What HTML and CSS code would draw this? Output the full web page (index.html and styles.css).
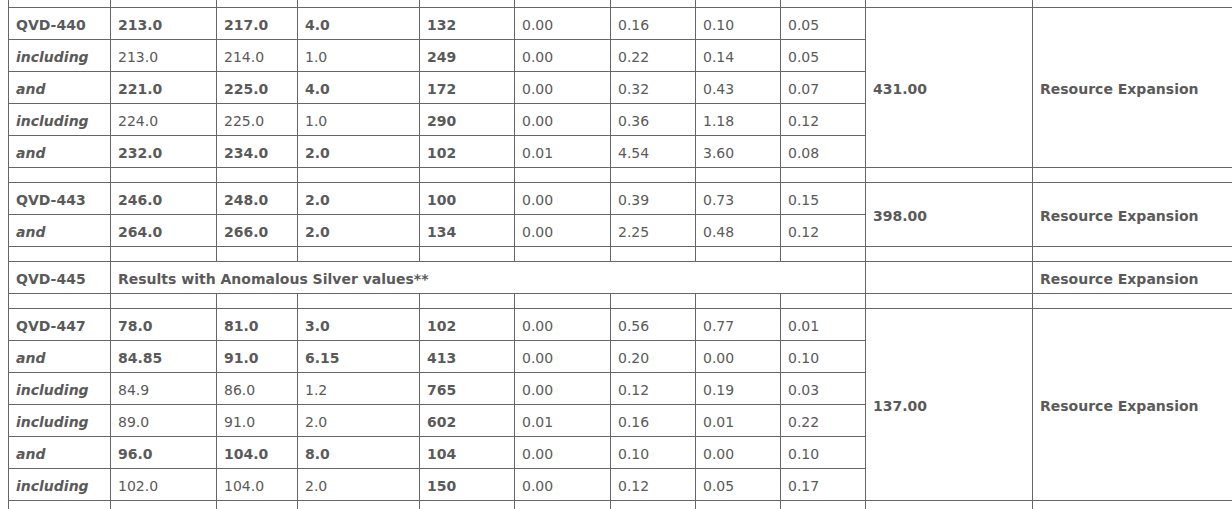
FILE: index.html
```html
<!DOCTYPE html>
<html>
<head>
<meta charset="utf-8">
<link rel="stylesheet" href="styles.css">
</head>
<body>
<table class="assay">
<colgroup>
<col class="c1"><col class="c2"><col class="c3"><col class="c4"><col class="c5"><col class="c6"><col class="c7"><col class="c8"><col class="c9"><col class="c10"><col class="c11">
</colgroup>
<tbody>
<tr class="gap"><td></td><td></td><td></td><td></td><td></td><td></td><td></td><td></td><td></td><td></td><td></td></tr>

<tr class="r"><td class="b">QVD-440</td><td class="b">213.0</td><td class="b">217.0</td><td class="b">4.0</td><td class="b">132</td><td>0.00</td><td>0.16</td><td>0.10</td><td>0.05</td><td class="b" rowspan="5">431.00</td><td class="b" rowspan="5">Resource Expansion</td></tr>
<tr class="r"><td class="bi">including</td><td>213.0</td><td>214.0</td><td>1.0</td><td class="b">249</td><td>0.00</td><td>0.22</td><td>0.14</td><td>0.05</td></tr>
<tr class="r"><td class="bi">and</td><td class="b">221.0</td><td class="b">225.0</td><td class="b">4.0</td><td class="b">172</td><td>0.00</td><td>0.32</td><td>0.43</td><td>0.07</td></tr>
<tr class="r"><td class="bi">including</td><td>224.0</td><td>225.0</td><td>1.0</td><td class="b">290</td><td>0.00</td><td>0.36</td><td>1.18</td><td>0.12</td></tr>
<tr class="r"><td class="bi">and</td><td class="b">232.0</td><td class="b">234.0</td><td class="b">2.0</td><td class="b">102</td><td>0.01</td><td>4.54</td><td>3.60</td><td>0.08</td></tr>

<tr class="gap"><td></td><td></td><td></td><td></td><td></td><td></td><td></td><td></td><td></td><td></td><td></td></tr>

<tr class="r"><td class="b">QVD-443</td><td class="b">246.0</td><td class="b">248.0</td><td class="b">2.0</td><td class="b">100</td><td>0.00</td><td>0.39</td><td>0.73</td><td>0.15</td><td class="b" rowspan="2">398.00</td><td class="b" rowspan="2">Resource Expansion</td></tr>
<tr class="r"><td class="bi">and</td><td class="b">264.0</td><td class="b">266.0</td><td class="b">2.0</td><td class="b">134</td><td>0.00</td><td>2.25</td><td>0.48</td><td>0.12</td></tr>

<tr class="gap"><td></td><td></td><td></td><td></td><td></td><td></td><td></td><td></td><td></td><td></td><td></td></tr>

<tr class="r"><td class="b">QVD-445</td><td class="b" colspan="8">Results with Anomalous Silver values**</td><td></td><td class="b">Resource Expansion</td></tr>

<tr class="gap"><td></td><td></td><td></td><td></td><td></td><td></td><td></td><td></td><td></td><td></td><td></td></tr>

<tr class="r"><td class="b">QVD-447</td><td class="b">78.0</td><td class="b">81.0</td><td class="b">3.0</td><td class="b">102</td><td>0.00</td><td>0.56</td><td>0.77</td><td>0.01</td><td class="b" rowspan="6">137.00</td><td class="b" rowspan="6">Resource Expansion</td></tr>
<tr class="r"><td class="bi">and</td><td class="b">84.85</td><td class="b">91.0</td><td class="b">6.15</td><td class="b">413</td><td>0.00</td><td>0.20</td><td>0.00</td><td>0.10</td></tr>
<tr class="r"><td class="bi">including</td><td>84.9</td><td>86.0</td><td>1.2</td><td class="b">765</td><td>0.00</td><td>0.12</td><td>0.19</td><td>0.03</td></tr>
<tr class="r"><td class="bi">including</td><td>89.0</td><td>91.0</td><td>2.0</td><td class="b">602</td><td>0.01</td><td>0.16</td><td>0.01</td><td>0.22</td></tr>
<tr class="r"><td class="bi">and</td><td class="b">96.0</td><td class="b">104.0</td><td class="b">8.0</td><td class="b">104</td><td>0.00</td><td>0.10</td><td>0.00</td><td>0.10</td></tr>
<tr class="r"><td class="bi">including</td><td>102.0</td><td>104.0</td><td>2.0</td><td class="b">150</td><td>0.00</td><td>0.12</td><td>0.05</td><td>0.17</td></tr>

<tr class="gap"><td></td><td></td><td></td><td></td><td></td><td></td><td></td><td></td><td></td><td></td><td></td></tr>
</tbody>
</table>
</body>
</html>
```

FILE: styles.css
```css
html, body {
  margin: 0;
  padding: 0;
  overflow: hidden;
  background: #fff;
}
body {
  padding-left: 8px;
}
.assay {
  border-collapse: collapse;
  table-layout: fixed;
  width: 1250px;
  margin-top: -8px;
  font-family: "DejaVu Sans", Verdana, sans-serif;
  font-size: 14px;
  color: #5a5a5a;
}
.c1 { width: 102px; }
.c2 { width: 106px; }
.c3 { width: 81px; }
.c4 { width: 122px; }
.c5 { width: 95px; }
.c6 { width: 96px; }
.c7 { width: 85px; }
.c8 { width: 85px; }
.c9 { width: 85px; }
.c10 { width: 167px; }
.c11 { width: 226px; }
.assay td {
  border: 1px solid #666;
  padding: 2px 7px 0 7px;
  white-space: nowrap;
  overflow: hidden;
  vertical-align: middle;
}
.r {
  height: 32px;
}
.gap {
  height: 15px;
}
.gap td {
  padding: 0;
}
.b {
  font-weight: bold;
}
.bi {
  font-weight: bold;
  font-style: italic;
}
```
